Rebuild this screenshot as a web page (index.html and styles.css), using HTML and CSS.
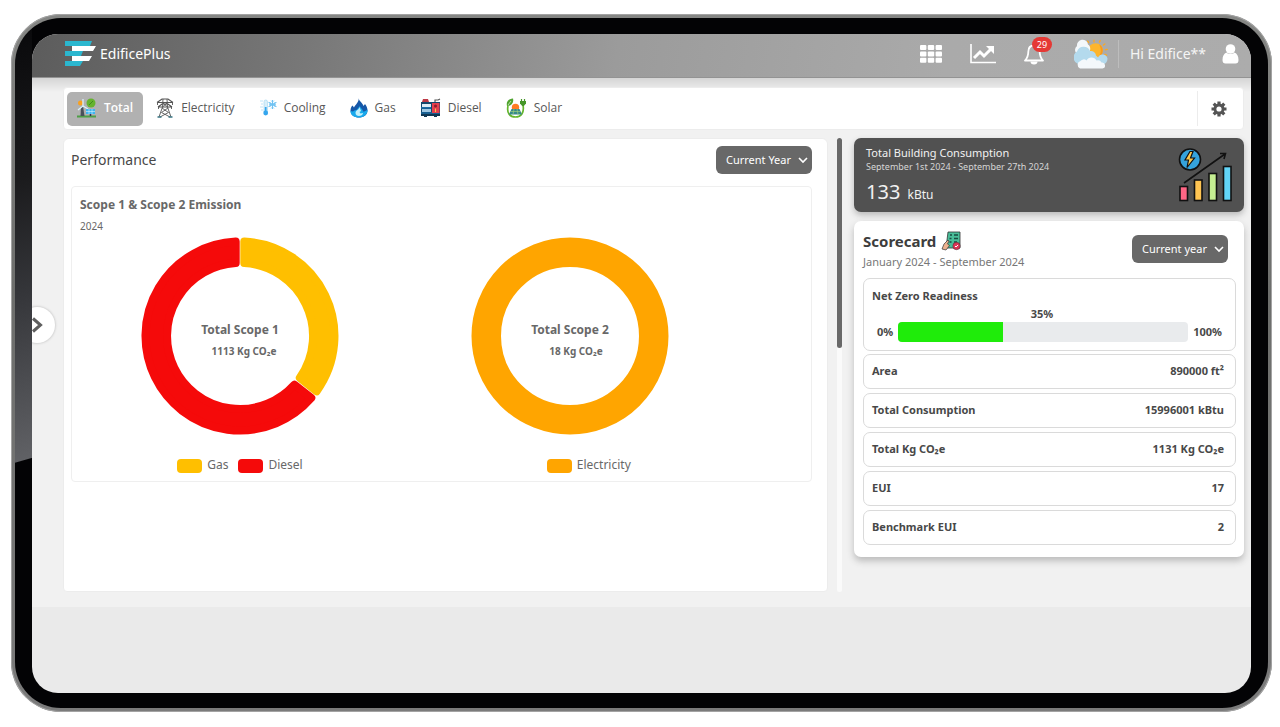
FILE: index.html
```html
<!DOCTYPE html>
<html lang="en">
<head>
<meta charset="utf-8">
<meta name="viewport" content="width=device-width, initial-scale=1">
<title>EdificePlus</title>
<link rel="stylesheet" href="styles.css">
</head>
<body>
<div class="tablet">
<div class="bezel">
<div class="screen">
  <header class="topbar">
    <a class="brand" href="#">
      <svg width="32" height="26" viewBox="0 0 32 26" aria-hidden="true">
        <path fill="#2bb7cf" d="M0 0h27l-2 5H0zM0 10h18l-2 5H0zM0 20h18l-3 5H0z"/>
        <path fill="#fff" d="M7 5h24l-3 5H7zM7 15h20l-3 5H7z"/>
      </svg>
      <span class="brand-name">EdificePlus</span>
    </a>
    <div class="tools">
      <button class="tool" aria-label="Apps">
        <svg width="22" height="18" viewBox="0 0 22 18" fill="#fff"><rect width="6.4" height="5" rx="1"/><rect x="7.8" width="6.4" height="5" rx="1"/><rect x="15.6" width="6.4" height="5" rx="1"/><rect y="6.4" width="6.4" height="5" rx="1"/><rect x="7.8" y="6.4" width="6.4" height="5" rx="1"/><rect x="15.6" y="6.4" width="6.4" height="5" rx="1"/><rect y="12.8" width="6.4" height="5" rx="1"/><rect x="7.8" y="12.8" width="6.4" height="5" rx="1"/><rect x="15.6" y="12.8" width="6.4" height="5" rx="1"/></svg>
      </button>
      <button class="tool" aria-label="Trends">
        <svg width="26" height="20" viewBox="0 0 26 20" fill="none" stroke="#fff"><path stroke-width="1.6" d="M1 0v18.5h25"/><path stroke-width="3" d="M4 14l6-6 4 4 7-7"/><path fill="#fff" stroke="none" d="M16 2h8v8z"/></svg>
      </button>
      <button class="tool bell" aria-label="Notifications">
        <svg width="20" height="22" viewBox="0 0 20 22" fill="none" stroke="#fff" stroke-width="1.8"><path d="M10 2.5c-4 0-5.7 2.800-5.700 6.200 0 4.500-1.400 6.800-3.300 8.800h18c-1.900-2-3.300-4.300-3.300-8.800 0-3.400-1.700-6.200-5.700-6.200z" stroke-linejoin="round"/><path d="M10 .5v2"/><path fill="#fff" stroke="none" d="M6.500 18.500h7a3.500 3 0 0 1-7 0z"/></svg>
        <span class="badge">29</span>
      </button>
      <svg class="weather" width="34" height="30" viewBox="0 0 34 30" role="img" aria-label="Partly cloudy">
        <g stroke="#f9a825" stroke-width="1.400" stroke-linecap="round"><path d="M20 1.200v1.600M25.500 3l.7-1.400M29.500 6l1.300-1M31.500 10.700l1.700-.3M31 15.500l1.500.7M14.500 3.500l-.8-1.300"/></g>
        <circle cx="21.500" cy="11.500" r="7.300" fill="#fdb52c"/><path fill="#f99a1c" d="M25 5.200a7.300 7.300 0 0 1-1 13.200c3-3 4-8 1-13.200z"/>
        <path fill="#f4f8fb" d="M3 15a5 5 0 0 1 0-8 5.500 5.500 0 0 1 11-1.500c3 2 3 6 0 9z"/>
        <path fill="#b4daed" d="M4 25a7 7 0 0 1-1-12.500 7 7 0 0 1 13-.5 5 5 0 0 1 6 4.500l2 2a5 5 0 0 1 9.500 1c0 3-1.500 5-4 6z"/>
        <path fill="#f4f8fb" d="M6 29.500a4 4 0 0 1 .5-7.500 4 4 0 0 1 6-.5 5.600 5.600 0 0 1 10 0 4 4 0 0 1 5 2 3 3 0 0 1 1 6z"/>
      </svg>
      <span class="rule"></span>
      <span class="greeting">Hi Edifice**</span>
      <button class="tool" aria-label="Account">
        <svg width="17" height="20" viewBox="0 0 17 20" fill="#fff"><circle cx="8.500" cy="5" r="4.800"/><path d="M4.500 8.500C2 9.500.5 12 .5 16c0 2.500 1 3.500 3 3.500h10c2 0 3-1 3-3.500 0-4-1.500-6.500-4-7.500-2 2-6 2-8 0z"/></svg>
      </button>
    </div>
  </header>

  <main class="workspace">
    <button class="drawer" aria-label="Open menu"><svg width="11" height="16" viewBox="0 0 11 16" fill="none" stroke="#5f5f5f" stroke-width="3"><path d="M1 1.500L8.500 8 1 14.500"/></svg></button>
    <nav class="tabs">
      <button class="tab active">
        <svg width="20" height="20" viewBox="0 0 20 20"><circle cx="3.500" cy="5" r="2.500" fill="#f9a11f"/><path fill="#4d9e45" d="M0 17.500h19v2H0z"/><path fill="#49515a" d="M4 9l2-1 1.500 10H3.500z"/><path d="M6 8V1M6 8l-5 4M6 8l5 3" stroke="#d9f0f8" stroke-width="1.300"/><circle cx="14" cy="5" r="4.500" fill="#65b32e"/><path d="M12 7l4-4" stroke="#3f8a1e"/><rect x="9" y="11" width="9" height="5" fill="#3fb5ef"/><path d="M9 13.500h9M12 11v5M15 11v5" stroke="#d7f1fd" stroke-width=".6"/><path d="M13.500 16v2" stroke="#335" stroke-width="1.500"/></svg>
        Total</button>
      <button class="tab">
        <svg width="18" height="20" viewBox="0 0 18 20" fill="none" stroke="#555" stroke-width="1"><path stroke-width="1.200" d="M1 4.500L6 1h6l5 3.500M2 9l4-3h6l4 3M1 4.500h16M2 9h14"/><path stroke-width=".9" d="M7 1L6.500 9 3 19M11 1l.5 8L15 19M7 5l4.500 4M11 5L6.500 9M6 10l6.500 4.500L4 19M12 10l-6.500 4.500L14 19M1.500 4.500v2.500M16.500 4.500v2.500M2.500 9v2M15.500 9v2"/><path stroke="#397584" stroke-width="1.500" d="M1.500 19h4M12.500 19h4"/></svg>
        Electricity</button>
      <button class="tab">
        <svg width="18" height="18" viewBox="0 0 18 18"><path d="M1 2h3M2 5h2M1 8h3M2 11h2" stroke="#bfe4f7"/><rect x="5" y="1" width="3.500" height="13" rx="1.700" fill="#d9effa" stroke="#9fd3ef" stroke-width=".6"/><path d="M6.700 8v6" stroke="#35a6ee" stroke-width="1.800"/><circle cx="6.700" cy="14" r="2.400" fill="#35a6ee"/><g stroke="#6ec1f2" stroke-width="1.100"><path d="M13.500 1v9M9.600 3.200l7.800 4.500M17.400 3.200L9.600 7.700"/><path d="M12 1.500l1.500 1.500L15 1.500M12 9.500L13.500 8 15 9.500M10 5l2 .5-.5-2M17 6l-2-.5.5 2M10 6l2-.5-.5 2M17 5l-2 .5.500-2" fill="none" stroke-width=".7"/></g></svg>
        Cooling</button>
      <button class="tab">
        <svg width="18" height="20" viewBox="0 0 18 20"><path fill="#1557a8" d="M8.500 0c.3 3 4 4.500 5 8l1.500-2c1.500 2 2.500 4 2.500 6.500 0 4.500-4 7-8.500 7S.5 17 .5 12.500c0-2.500 1-4 2-5L4 9.500C5 7 9.500 4 8.500 0z"/><path fill="#18a9ec" d="M.5 12.500C2 14 4 13.500 5 12c2 1 2.500-2 5-4 0 2 3 3 3 5.500 1.500 0 3-.5 4.500-2C18 16 14 19.500 9 19.500S0 17 .5 12.500z"/><path fill="#c3f0fb" d="M9.500 9c-.3 3-4 3-4 6 0 2 1.500 3 3.500 3s4-1 4-3l-2.500.5-1-1.500 1.500-1z"/></svg>
        Gas</button>
      <button class="tab">
        <svg width="21" height="20" viewBox="0 0 21 20"><path fill="#15476b" d="M1 4h19v13H1z"/><path fill="#bd3945" d="M3 1h5l1 3H2z"/><path d="M15 4V2h3l2-1" fill="none" stroke="#555" stroke-width="1.200"/><rect x="2" y="6" width="9" height="3" fill="#dcecf5"/><rect x="2" y="11" width="9" height="3" fill="#9fc7e2"/><path d="M1 9.800h10M1 15h19" stroke="#1e78b8" stroke-width="1.200"/><rect x="12" y="5" width="7.500" height="10" fill="#e63f4d"/><circle cx="15.500" cy="8" r="1.500" fill="#8b1f2c"/><path d="M15.500 10.500v3.500" stroke="#f1ca4b"/><path fill="#113753" d="M1 16h19v2h-3v1h-3v-1H7v1H4v-1H1z"/></svg>
        Diesel</button>
      <button class="tab">
        <svg width="21" height="20" viewBox="0 0 21 20"><path fill="#4ea32e" d="M1 8c-1-4 1-7 6-7.500C8 5 5 8 1 8z"/><path d="M2 7l3-4" stroke="#d6efc5" stroke-width=".8"/><path d="M2 8C.5 15 4 19 9.500 19s9-4 7.500-12" fill="none" stroke="#65b62c" stroke-width="1.700"/><path fill="#459628" d="M14 3h6v2.500L17.800 8h-1.600L14 5.500z"/><path d="M15.500 3V1M18.500 3V1" stroke="#459628" stroke-width="1.200"/><circle cx="9.500" cy="9.500" r="3.700" fill="#ff7b22"/><path d="M5.500 11h8l2.500 5.500H3z" fill="#37898b"/><path d="M4.500 13.500h10M8 11l-1 5.500M11 11l1 5.500" stroke="#9bd07a" stroke-width=".7"/></svg>
        Solar</button>
      <button class="settings" aria-label="Settings">
        <svg width="16" height="16" viewBox="0 0 16 16"><g stroke="#545454" stroke-width="3.200"><path d="M8 .5v15M.5 8h15M2.700 2.700l10.600 10.600M13.300 2.700L2.700 13.300"/></g><circle cx="8" cy="8" r="5.500" fill="#545454"/><circle cx="8" cy="8" r="2.600" fill="#fff"/></svg>
      </button>
    </nav>

    <div class="columns">
      <section class="performance">
        <div class="panel-head">
          <h1>Performance</h1>
          <div class="pick">
            <select aria-label="Performance period"><option>Current Year</option></select>
            <svg width="10" height="7" viewBox="0 0 10 7" fill="none" stroke="#fff" stroke-width="1.600"><path d="M1 1l4 4 4-4"/></svg>
          </div>
        </div>
        <article class="emission">
          <h2>Scope 1 &amp; Scope 2 Emission</h2>
          <p class="year">2024</p>
          <div class="charts">
            <figure>
              <svg width="200" height="200" viewBox="0 0 200 200">
                <g stroke-width="8" stroke-linejoin="round">
                <path fill="#ffbf00" stroke="#ffbf00" d="M104.300 5.600A94.500 94.500 0 0 1 176.600 155.300L159.800 141.900A73 73 0 0 0 104.300 27.100z"/>
                <path fill="#f50a0a" stroke="#f50a0a" d="M171.300 162A94.500 94.500 0 1 1 95.700 5.600L95.700 27.100A73 73 0 1 0 154.400 148.700z"/>
                </g>
                <text class="ring-name" x="100" y="98">Total Scope 1</text>
                <text class="ring-value" x="104" y="119">1113 Kg CO₂e</text>
              </svg>
              <figcaption><span class="key"><i class="swatch gas"></i>Gas</span><span class="key"><i class="swatch diesel"></i>Diesel</span></figcaption>
            </figure>
            <figure>
              <svg width="200" height="200" viewBox="0 0 200 200">
                <circle cx="100" cy="100" r="83.750" fill="none" stroke="#ffa500" stroke-width="29.500"/>
                <text class="ring-name" x="100" y="98">Total Scope 2</text>
                <text class="ring-value" x="106" y="119">18 Kg CO₂e</text>
              </svg>
              <figcaption class="single"><span class="key"><i class="swatch electricity"></i>Electricity</span></figcaption>
            </figure>
          </div>
        </article>
      </section>
      <div class="scroll-track"><div class="scroll-thumb"></div></div>
      <aside class="side">
        <section class="consumption">
          <div>
            <h2>Total Building Consumption</h2>
            <p class="range">September 1st 2024 - September 27th 2024</p>
            <p class="total">133 <small>kBtu</small></p>
          </div>
          <svg width="54" height="54" viewBox="0 0 54 54" aria-hidden="true">
            <g stroke="#111" stroke-width="1.600"><circle cx="12" cy="11.500" r="10.500" fill="#35a3dc"/><path fill="#ffc94d" stroke-width="1.200" d="M12 3.500L7 12h3.500L9 19.500l7.500-9.500h-4L15 3.500z"/>
            <rect x="2" y="38.500" width="7.500" height="14" fill="#ff6685"/><rect x="16.500" y="32" width="7.500" height="20.500" fill="#ffc552"/><rect x="31" y="25.500" width="7.500" height="27" fill="#c5ee92"/><rect x="45.500" y="18.500" width="7.500" height="34" fill="#62d5f8"/></g>
            <path d="M6 35L47 6M42 5.500h5.500L46 11" fill="none" stroke="#111" stroke-width="1.600"/>
          </svg>
        </section>
        <section class="scorecard">
          <div class="score-head">
            <div>
              <h2>Scorecard
                <svg width="20" height="20" viewBox="0 0 20 20" aria-hidden="true"><path fill="#49bd99" stroke="#333" stroke-width=".8" d="M7 1h12v16H5z"/><path d="M9 4h2M13 4h4M8.500 7.500h2M13 7.500h4M8.500 11h2M13 11h3" stroke="#194b42" stroke-width="1.300"/><path fill="#edb18f" stroke="#333" stroke-width=".7" d="M1 18l2-5 4-4 1 1-1.500 3 2 1.500L5 19z"/><circle cx="15.500" cy="15" r="3.700" fill="#dd3557" stroke="#333" stroke-width=".5"/><path d="M14 15l1 1 2-2" fill="none" stroke="#fff"/></svg>
              </h2>
              <p>January 2024 - September 2024</p>
            </div>
            <div class="pick">
              <select aria-label="Scorecard period"><option>Current year</option></select>
              <svg width="10" height="7" viewBox="0 0 10 7" fill="none" stroke="#fff" stroke-width="1.600"><path d="M1 1l4 4 4-4"/></svg>
            </div>
          </div>
          <div class="readiness">
            <h3>Net Zero Readiness</h3>
            <div class="meter-value">35%</div>
            <div class="meter-row"><span>0%</span><div class="meter"><div class="meter-fill" style="width:36%"></div></div><span>100%</span></div>
          </div>
          <dl class="stats">
            <div><dt>Area</dt><dd>890000 ft²</dd></div>
            <div><dt>Total Consumption</dt><dd>15996001 kBtu</dd></div>
            <div><dt>Total Kg CO₂e</dt><dd>1131 Kg CO₂e</dd></div>
            <div><dt>EUI</dt><dd>17</dd></div>
            <div><dt>Benchmark EUI</dt><dd>2</dd></div>
          </dl>
        </section>
      </aside>
    </div>
  </main>
</div>
</div>
</div>
</body>
</html>
```
FILE: styles.css
```css
* { box-sizing: border-box; }
body {
  margin: 0;
  min-height: 100vh;
  display: flex;
  padding: 14px 8px 15px 11px;
  background: #fff;
  color: #484848;
  font: 12px/16px "Noto Sans", "Open Sans", sans-serif;
}
h1, h2, h3, p, figure, dl, dd { margin: 0; }
button { border: 0; padding: 0; background: none; font: inherit; color: inherit; }
svg { display: block; flex: none; }

.tablet {
  flex: 1;
  display: flex;
  padding: 4px;
  border-radius: 50px;
  background: linear-gradient(#858684, #6d6e6c 40%, #7b7b7b);
  box-shadow: inset 0 0 0 1px #a3a3a3;
}
.bezel {
  flex: 1;
  display: flex;
  padding: 16px 17px 15px 17px;
  border-radius: 46px;
  background: linear-gradient(164deg, #08080a, #1b1b1d 35%, #35363a 60%, #606165 427px, transparent 428px) no-repeat left top / 17px 460px, #030305;
}
.screen {
  flex: 1;
  min-width: 0;
  display: flex;
  flex-direction: column;
  border-radius: 26px;
  background: #eaeaea;
  overflow: hidden;
}

.topbar {
  display: flex;
  justify-content: space-between;
  align-items: center;
  height: 44px;
  padding: 0 12px 4px 33px;
  border-bottom: 1px solid #939393;
  background: linear-gradient(100deg, #5c5c5c, #777 22%, #9b9b9b 48%, #aaa 75%, #acacac);
  color: #fff;
}
.brand { display: flex; align-items: center; gap: 3px; color: #fff; text-decoration: none; }
.brand-name { font-size: 14px; }
.tools { display: flex; align-items: center; }
.tool { margin-right: 28px; }
.bell { position: relative; margin-right: 30px; }
.badge {
  position: absolute;
  top: -6px;
  left: 8px;
  width: 20px;
  border-radius: 8px;
  background: #e53935;
  font-size: 9px;
  line-height: 15px;
  text-align: center;
}
.weather { margin-right: 10px; }
.rule { width: 1px; height: 28px; background: #bdbdbd; margin-right: 11px; }
.greeting { margin-right: 16px; font-size: 14px; color: #f5f5f5; }
.tool:last-child { margin-right: 0; }

.workspace {
  position: relative;
  padding: 9px 7px 15px 31px;
  background: linear-gradient(#d5d5d5, #f1f1f1 14px);
}
.drawer {
  position: absolute;
  left: -13px;
  top: 229px;
  width: 36px;
  height: 36px;
  padding-left: 13px;
  border-radius: 50%;
  background: #fff;
  box-shadow: 0 0 2px 1px #d3d3d3;
}
.tabs {
  display: flex;
  align-items: center;
  gap: 3px;
  height: 43px;
  padding: 3px;
  border: 1px solid #ececec;
  border-radius: 4px;
  background: #fff;
}
.tab {
  display: flex;
  align-items: center;
  gap: 7px;
  height: 34px;
  padding: 0 11px 2px 10px;
  border-radius: 5px;
  font-family: "Open Sans", "Noto Sans", sans-serif;
  font-weight: 500;
  color: #585858;
}
.tab.active { padding-right: 10px; background: #b1b1b1; color: #fff; font-weight: 600; }
.settings { margin-left: auto; height: 35px; padding: 0 13px; border-left: 1px solid #ececec; }

.columns { display: flex; margin-top: 8px; }
.performance {
  flex: 1;
  min-width: 0;
  height: 454px;
  padding: 7px 15px 0 7px;
  border: 1px solid #ececec;
  border-radius: 6px 6px 4px 4px;
  background: #fff;
}
.panel-head { display: flex; justify-content: space-between; }
.panel-head h1 { font-size: 14px; line-height: 28px; font-weight: 400; }
.pick { position: relative; width: 96px; height: 28px; }
.pick select {
  width: 100%;
  height: 100%;
  padding: 0 0 0 10px;
  border: 0;
  border-radius: 6px;
  appearance: none;
  background: #686868;
  color: #fff;
  font: inherit;
  font-size: 11px;
}
.pick svg { position: absolute; right: 4px; top: 11px; pointer-events: none; }
.emission {
  margin-top: 12px;
  height: 296px;
  padding: 9px 3px 0;
  border: 1px solid #efefef;
  border-radius: 4px;
  color: #686868;
}
.emission h2 { padding-left: 5px; font-size: 12px; line-height: 18px; font-weight: 700; }
.year { margin-top: 4px; padding-left: 5px; font-size: 10px; }
.charts { display: grid; grid-template-columns: repeat(2, 45%); }
figure svg { margin: 2px auto 0; }
figcaption { display: flex; justify-content: center; gap: 10px; margin-top: 20px; }
figcaption.single { padding-left: 38px; }
.key { display: flex; align-items: center; gap: 5px; }
.swatch { width: 25px; height: 14px; margin-top: 3px; border-radius: 4px; }
.gas { background: #ffbf00; }
.diesel { background: #f50a0a; }
.electricity { background: #ffa500; }
.ring-name, .ring-value { fill: #686868; font-weight: 700; text-anchor: middle; }
.ring-name { font-size: 12px; }
.ring-value { font-size: 10px; }

.scroll-track { width: 5px; margin: 0 12px 0 9px; border-radius: 3px; background: #fafafa; }
.scroll-thumb { height: 210px; border-radius: 3px; background: #686868; }

.side { width: 390px; }
.consumption {
  display: flex;
  justify-content: space-between;
  align-items: center;
  height: 74px;
  padding: 0 12px;
  border-radius: 7px;
  background: #515151;
  color: #f2f2f2;
  box-shadow: 0 3px 6px #b8b8b8;
}
.consumption h2 { margin-top: 3px; font-size: 11px; line-height: 15px; font-weight: 400; }
.range { font-size: 9px; line-height: 14px; color: #d5d5d5; }
.total { margin-top: 4px; font-size: 20px; line-height: 28px; }
.total small { margin-left: 2px; font-size: 12px; }
.scorecard {
  margin-top: 9px;
  padding: 7px 8px 12px 9px;
  border-radius: 7px;
  background: #fff;
  box-shadow: 0 4px 7px #bbb;
}
.score-head { display: flex; justify-content: space-between; align-items: center; padding: 0 8px 0 0; }
.score-head h2 { display: flex; align-items: center; gap: 5px; font-size: 15px; line-height: 26px; color: #3d3d3d; }
.score-head p { font-size: 11px; line-height: 16px; color: #777; }
.readiness {
  margin-top: 8px;
  height: 73px;
  padding: 8px 13px 0 8px;
  border: 1px solid #dadada;
  border-radius: 7px;
  font-weight: 700;
  font-size: 11px;
}
.readiness h3 { font-size: 11px; line-height: 18px; }
.meter-value { padding-right: 10px; text-align: center; line-height: 17px; }
.meter-row { display: flex; align-items: center; gap: 5px; padding-left: 5px; }
.meter { flex: 1; height: 20px; border-radius: 4px; background: #e9ebed; overflow: hidden; }
.meter-fill { height: 100%; background: #1fec0a; }
.stats { display: grid; gap: 4px; margin-top: 3px; font-size: 11px; font-weight: 700; }
.stats div {
  display: flex;
  justify-content: space-between;
  align-items: center;
  height: 35px;
  padding: 0 11px 1px 8px;
  border: 1px solid #dadada;
  border-radius: 7px;
}
```
